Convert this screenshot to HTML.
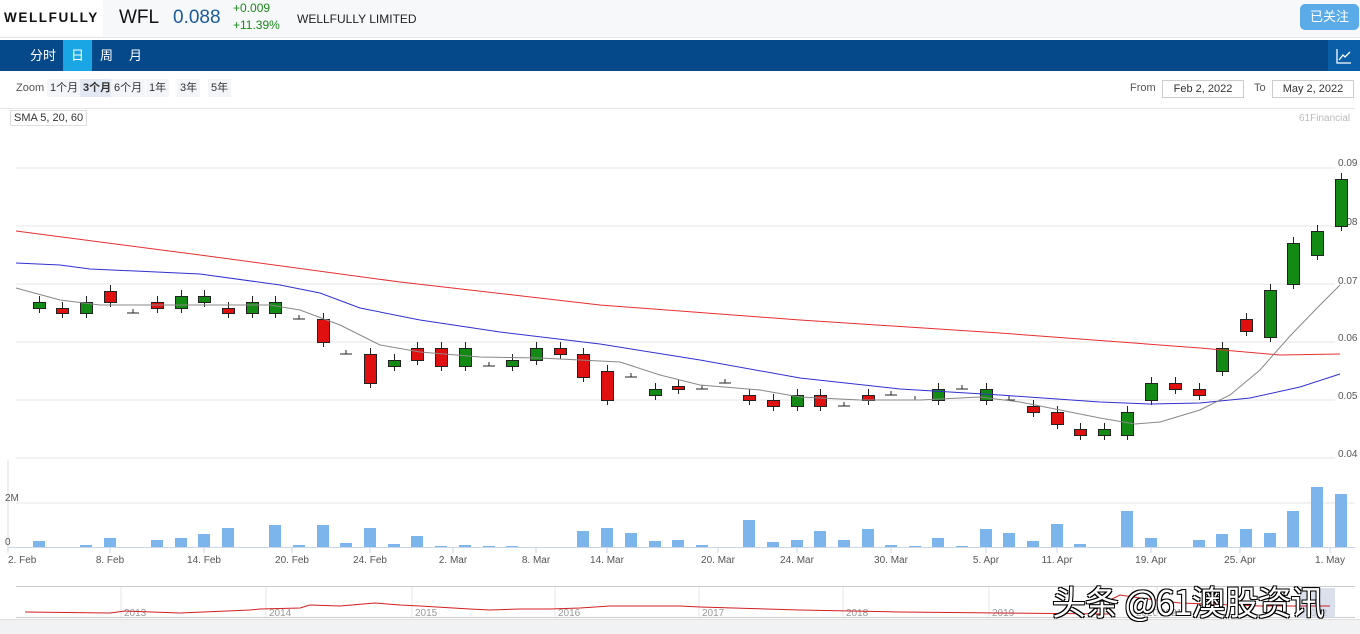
<!DOCTYPE html>
<html><head><meta charset="utf-8">
<style>
*{margin:0;padding:0;box-sizing:border-box}
body{width:1360px;height:634px;overflow:hidden;background:#fff;font-family:"Liberation Sans","Noto Sans CJK SC",sans-serif;position:relative}
.hdr{position:absolute;left:0;top:0;width:1360px;height:38px;background:#f6f8fa;border-bottom:1px solid #e3e6ea}
.logo{position:absolute;left:0;top:0;width:103px;height:36px;background:#fff;font-weight:bold;font-size:13.5px;letter-spacing:1.6px;line-height:36px;padding-left:4px;color:#111}
.nav{position:absolute;left:0;top:40px;width:1360px;height:31px;background:#05498a}
.nav span{position:absolute;top:0;height:31px;line-height:31px;color:#fff;font-size:13px;text-align:center}
.t{position:absolute;white-space:nowrap}
.zb{position:absolute;top:79px;height:18px;line-height:18px;font-size:11px;color:#333;background:#f3f5f8;padding:0 3px}
.inp{position:absolute;top:80px;height:18px;border:1px solid #ccc;font-size:11px;color:#333;line-height:16px;text-align:center;background:#fff}
</style></head><body>
<div class="hdr"></div>
<div class="logo">WELLFULLY</div>
<div class="t" style="left:119px;top:7px;font-size:19px;color:#111">WFL</div>
<div class="t" style="left:173px;top:7px;font-size:19px;color:#1c5b98">0.088</div>
<div class="t" style="left:233px;top:1px;font-size:12px;color:#1a8a1a">+0.009</div>
<div class="t" style="left:233px;top:18px;font-size:12px;color:#1a8a1a">+11.39%</div>
<div class="t" style="left:297px;top:12px;font-size:12px;color:#222">WELLFULLY LIMITED</div>
<div style="position:absolute;left:1300px;top:4px;width:59px;height:26px;background:#5aabe8;border-radius:5px;color:#fff;font-size:13px;line-height:26px;text-align:center">已关注</div>
<div class="nav">
<span style="left:25px;width:36px">分时</span>
<span style="left:63px;width:29px;background:#1aa6e4">日</span>
<span style="left:92px;width:29px">周</span>
<span style="left:121px;width:29px">月</span>
<span style="left:1328px;width:32px;background:#0a5ea8"><svg width="16" height="16" viewBox="0 0 16 16" style="margin-top:8px"><path d="M1 1V15H15" stroke="#fff" fill="none" stroke-width="1.3"/><path d="M3 12L7 7L9 9L14 4" stroke="#fff" fill="none" stroke-width="1.3"/></svg></span>
</div>
<div class="t" style="left:16px;top:82px;font-size:11px;color:#555">Zoom</div>
<div class="zb" style="left:47px">1个月</div>
<div class="zb" style="left:80px;font-weight:bold;background:#e3e9f2">3个月</div>
<div class="zb" style="left:111px">6个月</div>
<div class="zb" style="left:146px">1年</div>
<div class="zb" style="left:177px">3年</div>
<div class="zb" style="left:208px">5年</div>
<div class="t" style="left:1130px;top:82px;font-size:11px;color:#555">From</div>
<div class="inp" style="left:1162px;width:82px">Feb 2, 2022</div>
<div class="t" style="left:1254px;top:82px;font-size:11px;color:#555">To</div>
<div class="inp" style="left:1272px;width:82px">May 2, 2022</div>
<div style="position:absolute;left:0;top:108px;width:1355px;height:1px;background:#e6e6e6"></div>
<div style="position:absolute;left:10px;top:110px;border:1px solid #ddd;font-size:11px;color:#333;padding:1px 3px;background:#fff">SMA 5, 20, 60</div>
<div class="t" style="left:1299px;top:113px;font-size:10px;color:#bbb">61Financial</div>
<svg id="c" width="1360" height="634" style="position:absolute;left:0;top:0" font-family="Liberation Sans" font-size="10"></svg>
<div style="position:absolute;left:0;top:619px;width:1360px;height:15px;background:#f1f2f4;border-top:1px solid #ddd"></div>
<div class="t" style="left:1052px;top:576px;font-size:34px;letter-spacing:-1px;color:#fff;font-family:'Noto Sans CJK SC',sans-serif;text-shadow:-1px -1px 0 #000,1px -1px 0 #000,-1px 1px 0 #000,1px 1px 0 #000">头条 @61澳股资讯</div>
<script>
var s='';
[168,226,284,342,400,458].forEach(function(y){s+='<line x1="16" x2="1335" y1="'+y+'" y2="'+y+'" stroke="#e6e6e6"/>';});
var lab=[['0.09',162],['0.08',221],['0.07',280],['0.06',337],['0.05',395],['0.04',453]];
lab.forEach(function(l){s+='<text x="1338" y="'+(l[1]+4)+'" fill="#555">'+l[0]+'</text>';});
s+='<line x1="8" x2="8" y1="460" y2="548" stroke="#ddd"/><line x1="16" x2="1355" y1="503" y2="503" stroke="#e6e6e6"/><line x1="8" x2="1355" y1="547.5" y2="547.5" stroke="#ccd6eb"/>';
s+='<text x="5" y="501" fill="#555">2M</text><text x="5" y="545" fill="#555">0</text>';
var C=[[39,'g',302,308],[62,'r',308,313],[86,'g',302,313],[110,'r',291,302],[133,'d',313],[157,'r',302,308],[181,'g',296,308],[204,'g',296,302],[228,'r',308,313],[252,'g',302,313],[275,'g',302,313],[299,'d',319],[323,'r',319,342],[346,'d',354],[370,'r',354,383],[394,'g',360,366],[417,'r',348,360],[441,'r',348,366],[465,'g',348,366],[489,'d',366],[512,'g',360,366],[536,'g',348,360],[560,'r',348,354],[583,'r',354,377],[607,'r',371,400],[631,'d',377],[655,'g',389,395],[678,'r',386,389],[702,'d',389],[725,'d',383],[749,'r',395,400],[773,'r',400,406],[797,'g',395,406],[820,'r',395,406],[844,'d',406],[868,'r',395,400],[891,'d',395],[915,'d',400],[938,'g',389,400],[962,'d',389],[986,'g',389,400],[1009,'d',400],[1033,'r',406,412],[1057,'r',412,424],[1080,'r',429,435],[1104,'g',429,435],[1127,'g',412,435],[1151,'g',383,400],[1175,'r',383,389],[1199,'r',389,395],[1222,'g',348,371],[1246,'r',319,331],[1270,'g',290,337],[1293,'g',243,284],[1317,'g',231,255],[1341,'g',179,226]];
C.forEach(function(c){
 if(c[1]=='d'){s+='<line x1="'+(c[0]-6)+'" x2="'+(c[0]+6)+'" y1="'+c[2]+'" y2="'+c[2]+'" stroke="#222"/><line x1="'+c[0]+'" x2="'+c[0]+'" y1="'+(c[2]-4)+'" y2="'+c[2]+'" stroke="#222"/>';return;}
 s+='<line x1="'+c[0]+'.5" x2="'+c[0]+'.5" y1="'+(c[2]-6)+'" y2="'+(c[3]+5)+'" stroke="#222"/>';
 s+='<rect x="'+(c[0]-5.5)+'" y="'+(c[2]+.5)+'" width="12" height="'+(c[3]-c[2])+'" fill="'+(c[1]=='g'?'#138a13':'#e01010')+'" stroke="#222"/>';
});
function pl(p,col){s+='<polyline fill="none" stroke="'+col+'" stroke-width="1" points="'+p+'"/>';}
pl('16,231 200,255 400,282 600,305 800,320 1000,333 1200,348 1280,355 1340,354','#e53030');
pl('16,263 60,265 90,269 200,274 280,285 320,293 360,308 420,320 500,332 600,344 700,360 800,378 900,389 1000,395 1100,402 1150,404 1200,403 1250,398 1300,387 1340,374','#3030d0');
pl('16,288 60,300 100,305 200,305 270,305 300,310 340,325 380,345 420,352 480,357 540,358 620,362 660,375 700,385 760,390 800,397 860,400 920,400 980,397 1020,402 1060,410 1100,418 1135,424 1160,422 1200,410 1230,395 1260,370 1290,336 1320,305 1340,285','#888');
var V=[[39,541],[86,545],[110,538],[157,540],[181,538],[204,534],[228,528],[275,525],[299,545],[323,525],[346,543],[370,528],[394,544],[417,536],[441,546],[465,545],[489,546],[512,546],[583,531],[607,528],[631,533],[655,541],[678,540],[702,545],[749,520],[773,542],[797,540],[820,531],[844,540],[868,529],[891,545],[915,546],[938,538],[962,546],[986,529],[1009,533],[1033,541],[1057,524],[1080,544],[1127,511],[1151,538],[1199,540],[1222,534],[1246,529],[1270,533],[1293,511],[1317,487],[1341,494]];
V.forEach(function(v){s+='<rect x="'+(v[0]-6)+'" y="'+v[1]+'" width="12" height="'+(547-v[1])+'" fill="#7cb5ec"/>';});
var X=[[8,'2. Feb'],[110,'8. Feb'],[204,'14. Feb'],[292,'20. Feb'],[370,'24. Feb'],[453,'2. Mar'],[536,'8. Mar'],[607,'14. Mar'],[718,'20. Mar'],[797,'24. Mar'],[891,'30. Mar'],[986,'5. Apr'],[1057,'11. Apr'],[1151,'19. Apr'],[1240,'25. Apr'],[1330,'1. May']];
X.forEach(function(x){s+='<line x1="'+x[0]+'" x2="'+x[0]+'" y1="548" y2="553" stroke="#ccd6eb"/><text x="'+x[0]+'" y="563" fill="#555" text-anchor="'+(x[0]<20?'start':'middle')+'">'+x[1]+'</text>';});
s+='<line x1="16" x2="1355" y1="586.5" y2="586.5" stroke="#ccc"/><line x1="16" x2="1355" y1="617.5" y2="617.5" stroke="#ccc"/>';
var Y=[[121,'2013'],[266,'2014'],[412,'2015'],[555,'2016'],[699,'2017'],[843,'2018'],[989,'2019'],[1133,'2020'],[1157,'2021'],[1302,'2022']];
Y.forEach(function(y){s+='<line x1="'+y[0]+'" x2="'+y[0]+'" y1="587" y2="617" stroke="#e6e6e6"/><text x="'+(y[0]+3)+'" y="616" fill="#999">'+y[1]+'</text>';});
s+='<rect x="1300" y="588" width="35" height="30" fill="#ccd3e6" opacity=".7"/>';
pl('25,612 110,613 125,611 180,613 250,610 260,609 300,608 310,605 340,606 375,603 400,605 420,606 470,609 490,610 520,609 550,609 580,608 610,606 640,606 680,606 700,607 800,610 900,612 1000,613 1108,614 1110,600 1120,595 1140,598 1180,603 1260,606 1330,606','#d02020');
document.getElementById('c').innerHTML=s;
</script>
</body></html>
